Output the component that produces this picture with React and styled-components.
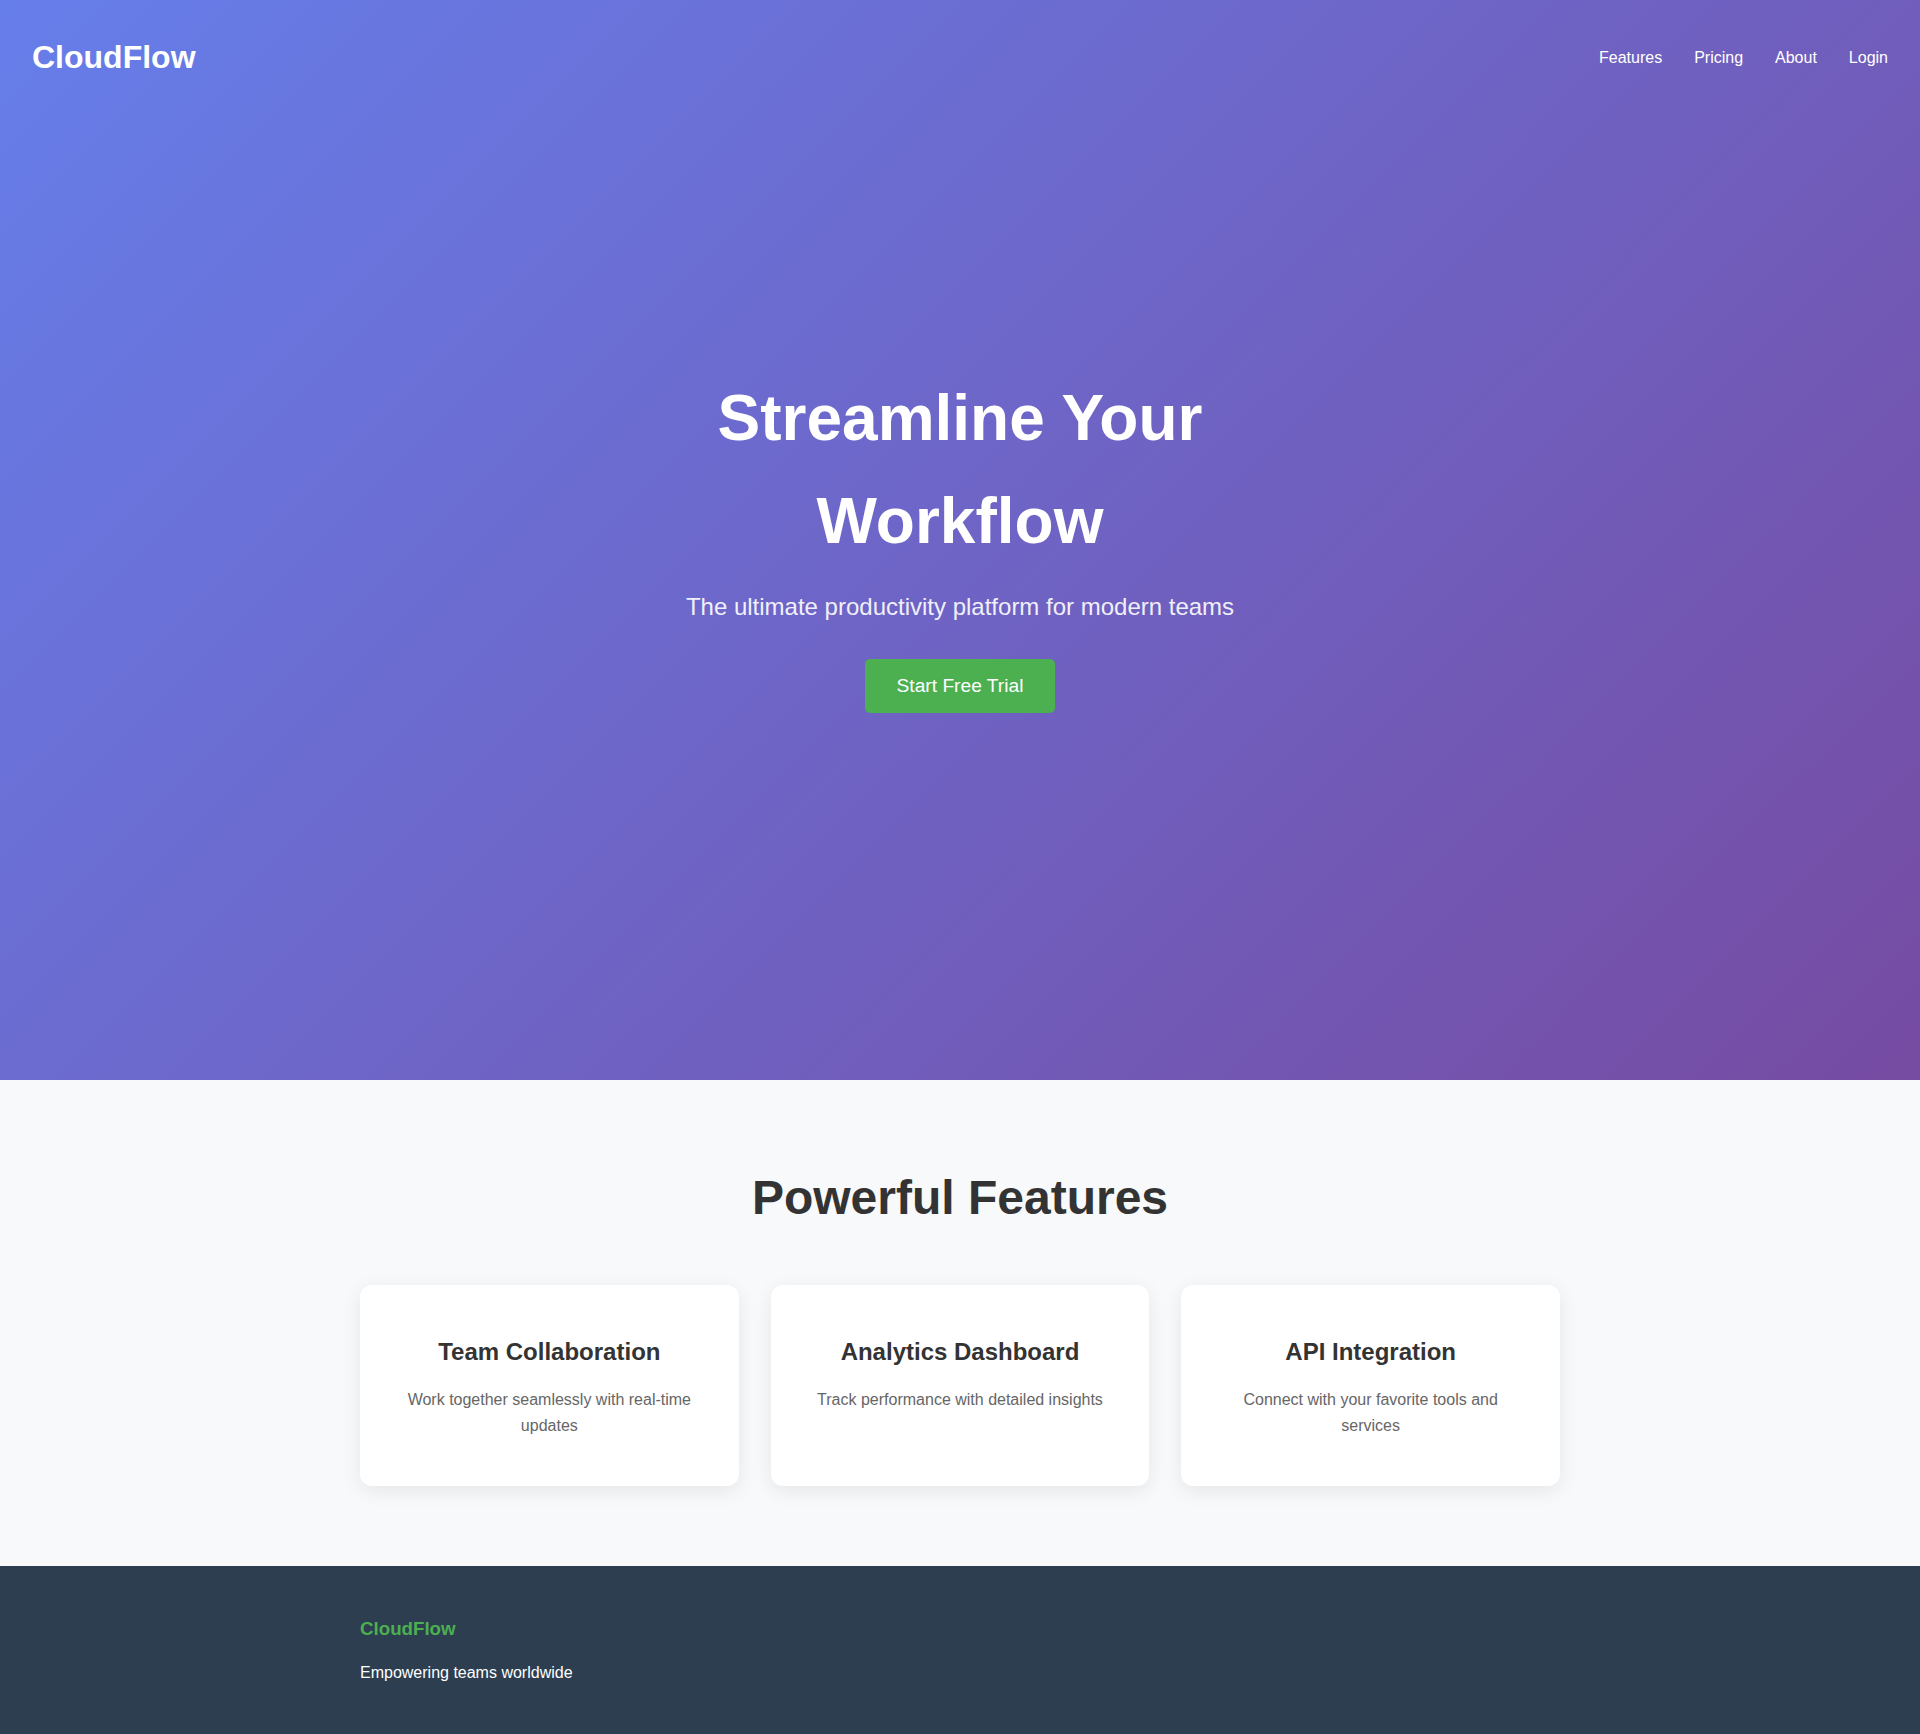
import React from "react";
import styled, { createGlobalStyle } from "styled-components";

const GlobalStyle = createGlobalStyle`
  * { box-sizing: border-box; }
  html, body { margin: 0; padding: 0; }
  body {
    font-family: "Liberation Sans", Arial, sans-serif;
    line-height: 1.6;
    color: #333;
    background: #ffffff;
  }
`;

const Hero = styled.section`
  height: 1080px;
  display: flex;
  flex-direction: column;
  padding-bottom: 115.2px;
  background: linear-gradient(135deg, #667eea 0%, #764ba2 100%);
  color: #ffffff;
`;

const Header = styled.header`
  display: flex;
  align-items: center;
  justify-content: space-between;
  padding: 32px;
`;

const Logo = styled.div`
  font-size: 32px;
  font-weight: 700;
  line-height: 1.6;
`;

const NavLinks = styled.nav`
  display: flex;
  gap: 32px;
`;

const NavLink = styled.a`
  color: #ffffff;
  text-decoration: none;
  font-size: 16px;
`;

const HeroContent = styled.div`
  flex: 1;
  display: flex;
  flex-direction: column;
  align-items: center;
  justify-content: center;
  text-align: center;
`;

const HeroTitle = styled.h1`
  margin: 0 0 16px;
  font-size: 64px;
  font-weight: 700;
  line-height: 1.6;
  max-width: 600px;
`;

const HeroSubtitle = styled.p`
  margin: 0 0 32px;
  font-size: 24px;
  opacity: 0.9;
`;

const CtaButton = styled.button`
  font-family: "Liberation Sans", Arial, sans-serif;
  background: #4caf50;
  color: #ffffff;
  border: none;
  border-radius: 5px;
  padding: 16px 32px;
  font-size: 19.2px;
  cursor: pointer;
`;

const Features = styled.section`
  background: #f8f9fa;
  padding: 80px 32px;
`;

const SectionTitle = styled.h2`
  margin: 0 0 48px;
  text-align: center;
  font-size: 48px;
  font-weight: 700;
  color: #333;
`;

const Grid = styled.div`
  max-width: 1200px;
  margin: 0 auto;
  display: grid;
  grid-template-columns: repeat(3, 1fr);
  gap: 32px;
`;

const Card = styled.div`
  background: #ffffff;
  border-radius: 12px;
  padding: 48px 40px;
  text-align: center;
  box-shadow: 0 5px 20px rgba(0, 0, 0, 0.08);
`;

const CardTitle = styled.h3`
  margin: 0 0 16px;
  font-size: 24px;
  font-weight: 700;
  color: #333;
`;

const CardText = styled.p`
  margin: 0;
  font-size: 16px;
  color: #666;
`;

const Footer = styled.footer`
  background: #2c3e50;
  color: #ffffff;
  padding: 48px 32px;
`;

const FooterInner = styled.div`
  max-width: 1200px;
  margin: 0 auto;
`;

const FooterBrand = styled.h3`
  margin: 0 0 16px;
  font-size: 18.72px;
  font-weight: 700;
  color: #4caf50;
`;

const FooterText = styled.p`
  margin: 0;
  font-size: 16px;
`;

const features = [
  { title: "Team Collaboration", text: "Work together seamlessly with real-time updates" },
  { title: "Analytics Dashboard", text: "Track performance with detailed insights" },
  { title: "API Integration", text: "Connect with your favorite tools and services" },
];

export default function App() {
  return (
    <>
      <GlobalStyle />
      <Hero>
        <Header>
          <Logo>CloudFlow</Logo>
          <NavLinks>
            <NavLink href="#">Features</NavLink>
            <NavLink href="#">Pricing</NavLink>
            <NavLink href="#">About</NavLink>
            <NavLink href="#">Login</NavLink>
          </NavLinks>
        </Header>
        <HeroContent>
          <HeroTitle>Streamline Your Workflow</HeroTitle>
          <HeroSubtitle>The ultimate productivity platform for modern teams</HeroSubtitle>
          <CtaButton>Start Free Trial</CtaButton>
        </HeroContent>
      </Hero>
      <Features>
        <SectionTitle>Powerful Features</SectionTitle>
        <Grid>
          {features.map((f) => (
            <Card key={f.title}>
              <CardTitle>{f.title}</CardTitle>
              <CardText>{f.text}</CardText>
            </Card>
          ))}
        </Grid>
      </Features>
      <Footer>
        <FooterInner>
          <FooterBrand>CloudFlow</FooterBrand>
          <FooterText>Empowering teams worldwide</FooterText>
        </FooterInner>
      </Footer>
    </>
  );
}
